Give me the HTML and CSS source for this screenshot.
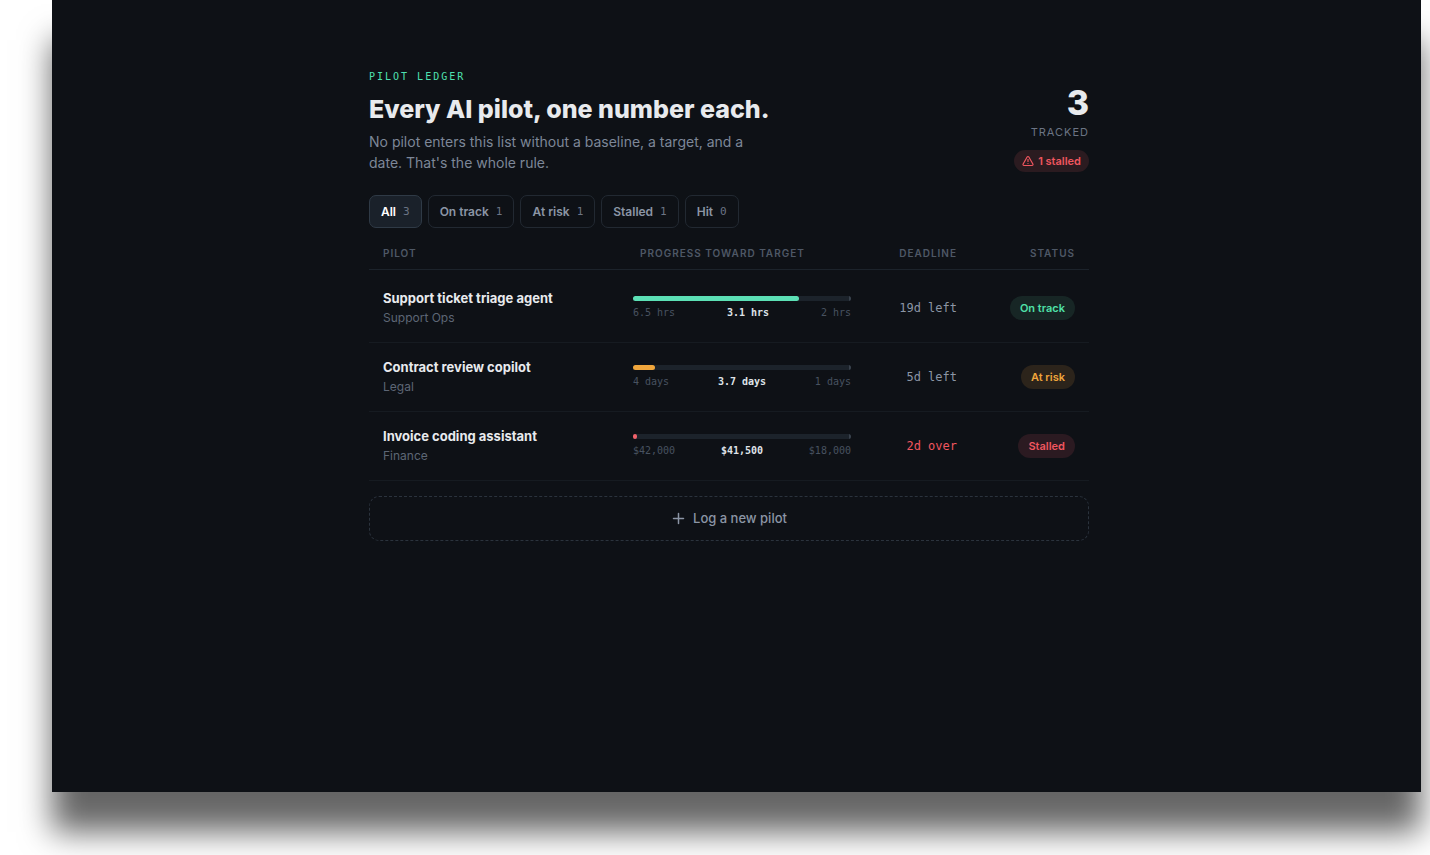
FILE: index.html
```
<!DOCTYPE html>
<html lang="en">
<head>
    <meta charset="UTF-8">
    <meta name="viewport" content="width=device-width, initial-scale=1.0">
    <title>Pilot Ledger</title>
    <link rel="stylesheet" href="styles.css">
</head>
<body>
    <div class="window">
        <main class="ledger">
            <header class="header">
                <div class="intro">
                    <p class="eyebrow">PILOT LEDGER</p>
                    <h1>Every AI pilot, one number each.</h1>
                    <p class="subtitle">No pilot enters this list without a baseline, a target, and a date. That's the whole rule.</p>
                </div>
                <div class="summary">
                    <span class="total">3</span>
                    <span class="total-label">TRACKED</span>
                    <span class="alert">
                        <svg width="12" height="12" viewBox="0 0 24 24" fill="none" stroke="currentColor" stroke-width="2.4" stroke-linecap="round" stroke-linejoin="round" aria-hidden="true">
                            <path d="m21.73 18-8-14a2 2 0 0 0-3.48 0l-8 14A2 2 0 0 0 4 21h16a2 2 0 0 0 1.73-3"/>
                            <path d="M12 9v4"/>
                            <path d="M12 17h.01"/>
                        </svg>
                        1 stalled
                    </span>
                </div>
            </header>

            <div class="filters">
                <button class="filter active">All <span class="count">3</span></button>
                <button class="filter">On track <span class="count">1</span></button>
                <button class="filter">At risk <span class="count">1</span></button>
                <button class="filter">Stalled <span class="count">1</span></button>
                <button class="filter">Hit <span class="count">0</span></button>
            </div>

            <table class="pilots">
                <colgroup>
                    <col class="col-pilot">
                    <col class="col-progress">
                    <col class="col-deadline">
                    <col class="col-status">
                </colgroup>
                <thead>
                    <tr>
                        <th>PILOT</th>
                        <th class="progress-head">PROGRESS TOWARD TARGET</th>
                        <th class="right">DEADLINE</th>
                        <th class="right">STATUS</th>
                    </tr>
                </thead>
                <tbody>
                    <tr>
                        <td>
                            <div class="name">Support ticket triage agent</div>
                            <div class="team">Support Ops</div>
                        </td>
                        <td>
                            <div class="track"><div class="fill green" style="width: 76%"></div></div>
                            <div class="values"><span>6.5 hrs</span><strong>3.1 hrs</strong><span>2 hrs</span></div>
                        </td>
                        <td class="deadline">19d left</td>
                        <td class="right"><span class="status on-track">On track</span></td>
                    </tr>
                    <tr>
                        <td>
                            <div class="name">Contract review copilot</div>
                            <div class="team">Legal</div>
                        </td>
                        <td>
                            <div class="track"><div class="fill amber" style="width: 10%"></div></div>
                            <div class="values"><span>4 days</span><strong>3.7 days</strong><span>1 days</span></div>
                        </td>
                        <td class="deadline">5d left</td>
                        <td class="right"><span class="status at-risk">At risk</span></td>
                    </tr>
                    <tr>
                        <td>
                            <div class="name">Invoice coding assistant</div>
                            <div class="team">Finance</div>
                        </td>
                        <td>
                            <div class="track"><div class="fill red" style="width: 2%"></div></div>
                            <div class="values"><span>$42,000</span><strong>$41,500</strong><span>$18,000</span></div>
                        </td>
                        <td class="deadline over">2d over</td>
                        <td class="right"><span class="status stalled">Stalled</span></td>
                    </tr>
                </tbody>
            </table>

            <button class="add">
                <svg width="15" height="15" viewBox="0 0 24 24" fill="none" stroke="currentColor" stroke-width="2.4" stroke-linecap="round" aria-hidden="true">
                    <path d="M4 12h16M12 4v16"/>
                </svg>
                Log a new pilot
            </button>
        </main>
    </div>
</body>
</html>
```
FILE: styles.css
```
* {
    box-sizing: border-box;
}
body {
    margin: 0;
    background: #fff;
    font-family: Inter, "Liberation Sans", sans-serif;
    overflow: hidden;
}
.window {
    margin: 0 9px 63px 52px;
    min-height: calc(100vh - 63px);
    padding: 69px 39px 64px 24px;
    background: #0e1116;
    box-shadow: 0 40px 30px rgba(0, 0, 0, 0.6);
}
.ledger {
    max-width: 720px;
    margin: 0 auto;
}
.header {
    display: flex;
    justify-content: space-between;
    align-items: flex-end;
    margin-bottom: 22px;
}
.eyebrow {
    margin: 0 0 8px;
    font-family: "DejaVu Sans Mono", monospace;
    font-size: 10px;
    line-height: 16px;
    letter-spacing: 2px;
    color: #4fe0b0;
}
h1 {
    margin: 0 0 6px;
    font-size: 25px;
    font-weight: 800;
    line-height: 32px;
    color: #e8eaed;
}
.subtitle {
    max-width: 380px;
    margin: 0;
    font-size: 14px;
    line-height: 21px;
    color: #7d8798;
}
.summary {
    display: flex;
    flex-direction: column;
    align-items: flex-end;
}
.total {
    font-size: 34px;
    font-weight: 800;
    line-height: 34px;
    color: #e8eaed;
}
.total-label {
    margin: 4px 0 10px;
    font-size: 11px;
    line-height: 16px;
    letter-spacing: 1px;
    color: #6b7484;
}
.alert {
    display: flex;
    align-items: center;
    gap: 4px;
    margin-bottom: 1px;
    padding: 3px 8px;
    border-radius: 11px;
    background: #2b1b20;
    font-size: 11px;
    font-weight: 600;
    line-height: 16px;
    color: #f0565f;
}
.filters {
    display: flex;
    gap: 6px;
}
.filter {
    display: flex;
    align-items: center;
    gap: 7px;
    padding: 7px 11px;
    border: 1px solid #222932;
    border-radius: 7px;
    background: transparent;
    font-family: inherit;
    font-size: 12px;
    font-weight: 600;
    line-height: 17px;
    color: #8b95a5;
    cursor: pointer;
}
.filter.active {
    border-color: #2f3a46;
    background: #1a212a;
    color: #fff;
}
.count {
    font-family: "DejaVu Sans Mono", monospace;
    font-size: 11px;
    font-weight: 400;
    color: #6b7484;
}
.pilots {
    width: 100%;
    margin-top: 9px;
    border-collapse: separate;
    border-spacing: 0;
    table-layout: fixed;
}
.col-progress {
    width: 246px;
}
.col-deadline {
    width: 106px;
}
.col-status {
    width: 118px;
}
th {
    padding: 8px 14px;
    border-bottom: 1px solid #1c232b;
    font-size: 10px;
    font-weight: 600;
    line-height: 16px;
    letter-spacing: 1px;
    text-align: left;
    white-space: nowrap;
    color: #4e5866;
}
th.progress-head {
    padding-left: 21px;
}
.right,
th.right {
    text-align: right;
}
tbody::before {
    content: "";
    display: table-row;
    height: 4px;
}
td {
    padding: 14px;
    border-bottom: 1px solid #161b21;
}
.name {
    font-size: 13px;
    font-weight: 700;
    line-height: 20px;
    color: #e8eaed;
}
.team {
    font-size: 12px;
    line-height: 20px;
    color: #5d6675;
}
.track {
    height: 5px;
    border-radius: 3px;
    background: linear-gradient(#3a434e, #3a434e) right / 2px 100% no-repeat #1c232b;
}
.fill {
    min-width: 4px;
    height: 5px;
    border-radius: 3px;
}
.green {
    background: #5ce0b5;
}
.amber {
    background: #f0a63c;
}
.red {
    background: #f0616a;
}
.values {
    display: flex;
    justify-content: space-between;
    margin-top: 5px;
    font-family: "DejaVu Sans Mono", monospace;
    font-size: 10px;
    line-height: 14px;
    color: #485260;
}
.values strong {
    color: #dfe3e8;
}
.deadline {
    font-family: "DejaVu Sans Mono", monospace;
    font-size: 12px;
    text-align: right;
    white-space: nowrap;
    color: #8b95a5;
}
.over {
    color: #f0565f;
}
.status {
    display: inline-block;
    padding: 4px 10px;
    border-radius: 12px;
    font-size: 11px;
    font-weight: 600;
    line-height: 16px;
}
.on-track {
    background: #172625;
    color: #4fe0a8;
}
.at-risk {
    background: #2c241b;
    color: #f0a63c;
}
.stalled {
    background: #2b1a21;
    color: #f0565f;
}
.add {
    display: flex;
    justify-content: center;
    align-items: center;
    gap: 7px;
    width: 100%;
    margin-top: 15px;
    padding: 12px;
    border: 1px dashed #2b333d;
    border-radius: 10px;
    background: transparent;
    font-family: inherit;
    font-size: 13px;
    font-weight: 500;
    line-height: 19px;
    color: #8b95a5;
    cursor: pointer;
}
```
